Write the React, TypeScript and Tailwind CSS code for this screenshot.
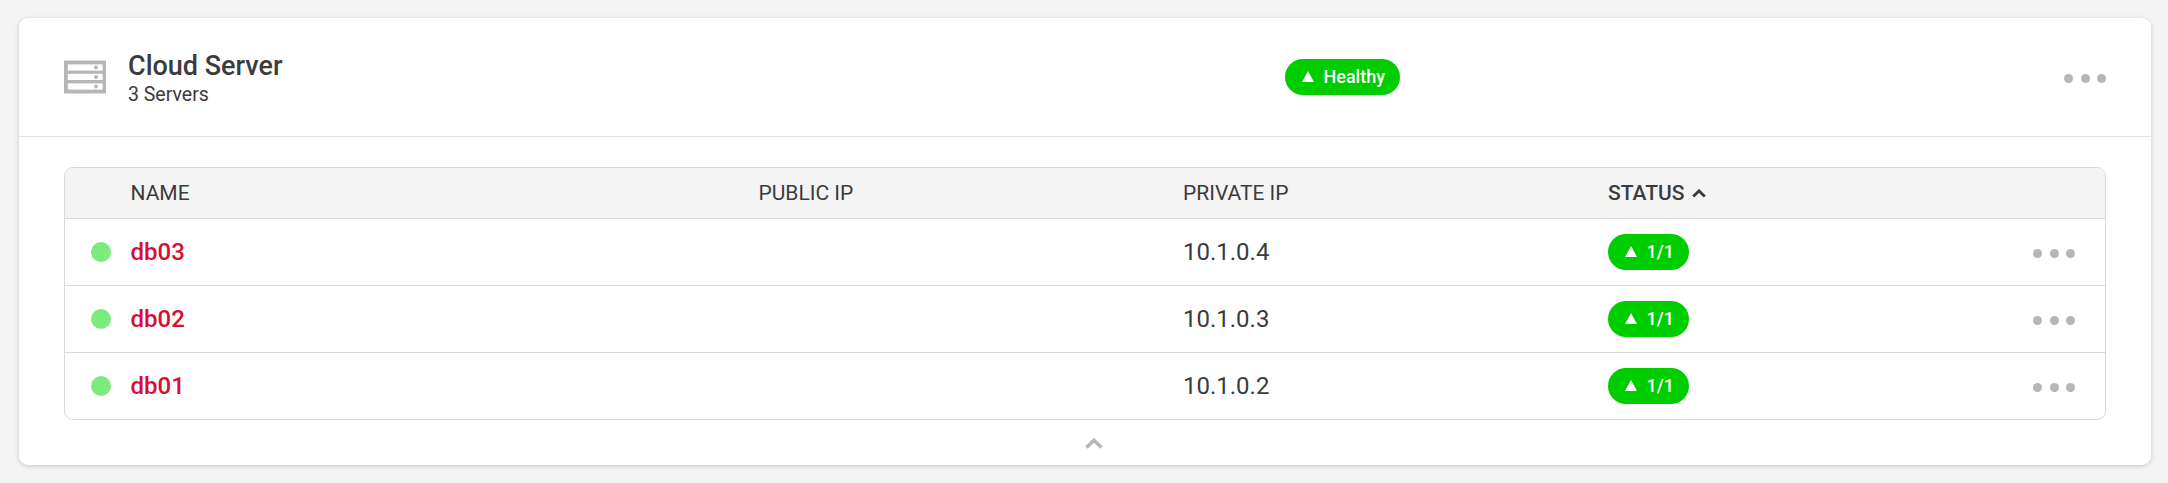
const servers = [
  { name: 'db03', ip: '10.1.0.4' },
  { name: 'db02', ip: '10.1.0.3' },
  { name: 'db01', ip: '10.1.0.2' },
];

const columns = 'grid grid-cols-[65.5px_628px_424.5px_425px_1fr] items-center';

function ServerIcon() {
  return (
    <svg width="42" height="34" viewBox="0 0 42 34" className="shrink-0">
      <rect y="0.5" width="42" height="33" fill="#b6b6b6" />
      {[4.4, 13.8, 23.4].map((y) => (
        <g key={y}>
          <rect x="3.8" y={y} width="34.8" height="6.2" fill="#fff" />
          <circle cx="32" cy={y + 3.1} r="2" fill="#b6b6b6" />
        </g>
      ))}
    </svg>
  );
}

function Dots() {
  return (
    <button aria-label="Actions" className="flex h-[9px] w-[42px] justify-between">
      <span className="size-[9px] rounded-full bg-[#b6b6b6]" />
      <span className="size-[9px] rounded-full bg-[#b6b6b6]" />
      <span className="size-[9px] rounded-full bg-[#b6b6b6]" />
    </button>
  );
}

function Badge({ label }: { label: string }) {
  return (
    <span className="inline-flex h-9 items-center rounded-full bg-[#00cd00] pr-[15px] pl-[16.5px] text-[18px] leading-9 font-medium text-white">
      <svg width="12" height="11" viewBox="0 0 12 11" className="mr-[10px] mb-px shrink-0">
        <path d="M6 0L12 11H0Z" fill="#fff" />
      </svg>
      {label}
    </span>
  );
}

export default function App() {
  return (
    <div className="h-[483px] bg-[#f4f4f4] pt-[18px] pr-[17px] pl-[19px] font-[Roboto,sans-serif] text-[#3b3b3b]">
      <section className="h-[447px] rounded-[9px] bg-white shadow-[0_1px_5px_rgba(0,0,0,0.18)]">
        <header className="flex h-[119px] items-center border-b border-[#e5e5e5] px-[45px]">
          <div className="flex w-[1221px] items-center">
            <ServerIcon />
            <div className="ml-[22px] pt-[4px]">
              <h1 className="text-[27px] leading-[30px] font-medium">Cloud Server</h1>
              <p className="pt-px text-[19.5px] leading-[25px]">3 Servers</p>
            </div>
          </div>
          <Badge label="Healthy" />
          <div className="ml-auto pt-[3px]">
            <Dots />
          </div>
        </header>
        <div className="px-[45px] pt-[30px]">
          <div className="overflow-hidden rounded-[9px] border border-[#d9d9d9]">
            <div className={`${columns} h-[50px] bg-[#f4f4f4] pt-[2px] text-[21px]`}>
              <span />
              <span>NAME</span>
              <span>PUBLIC IP</span>
              <span>PRIVATE IP</span>
              <span className="flex items-center font-medium">
                STATUS
                <svg width="14" height="9" viewBox="0 0 14 9" className="mb-[2px] ml-2">
                  <path d="M1.2 7.5L7 1.9L12.8 7.5" fill="none" stroke="#3b3b3b" strokeWidth="2.8" />
                </svg>
              </span>
            </div>
            {servers.map((server) => (
              <div key={server.name} className={`${columns} h-[67px] border-t border-[#d9d9d9] text-[24px]`}>
                <span className="ml-[26px] size-5 rounded-full bg-[#7dea7d]" />
                <a className="font-medium text-[#d90d33]">{server.name}</a>
                <span />
                <span>{server.ip}</span>
                <div className="flex items-center justify-between pr-[30px]">
                  <Badge label="1/1" />
                  <div className="pt-[3px]">
                    <Dots />
                  </div>
                </div>
              </div>
            ))}
          </div>
          <div className="flex justify-center pt-[18px] pl-[18px]">
            <svg width="18" height="11" viewBox="0 0 18 11">
              <path d="M1.5 9.5L9 2.2L16.5 9.5" fill="none" stroke="#b6b6b6" strokeWidth="3.4" />
            </svg>
          </div>
        </div>
      </section>
    </div>
  );
}
